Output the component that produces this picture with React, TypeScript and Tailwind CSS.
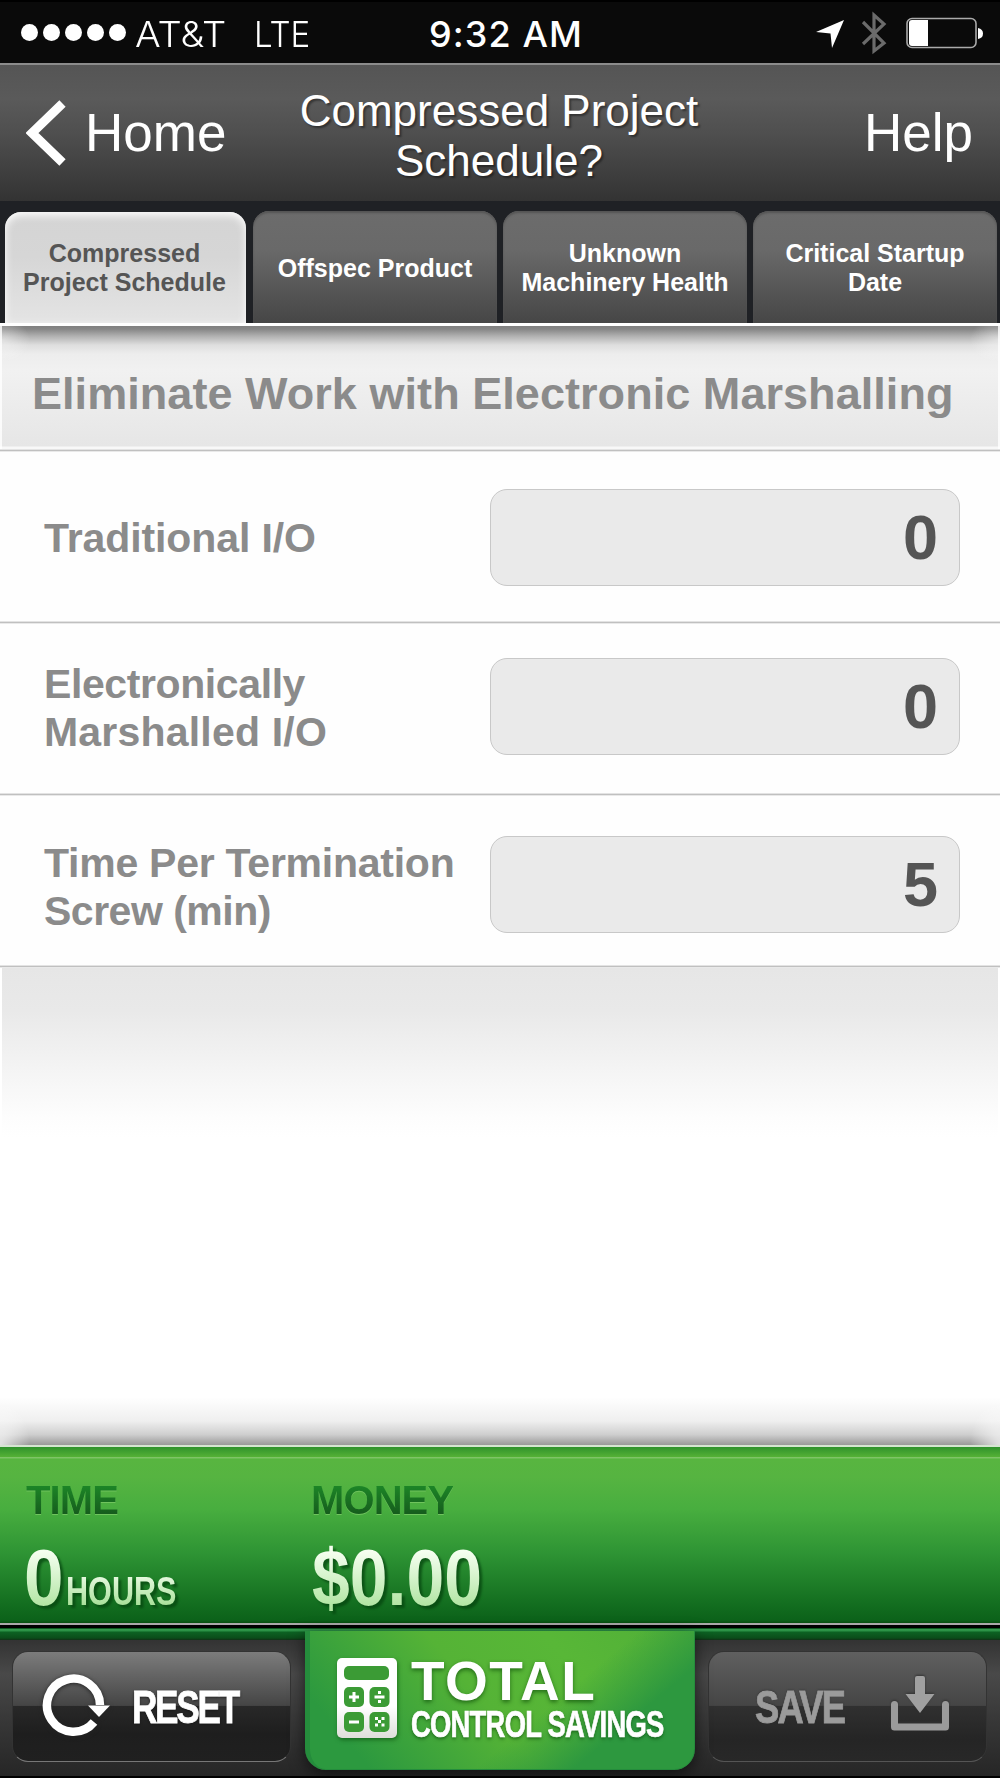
import { ReactNode } from "react";
import clsx from "clsx";

const TABS = [
  { lines: ["Compressed", "Project Schedule"], active: true },
  { lines: ["Offspec Product"] },
  { lines: ["Unknown", "Machinery Health"] },
  { lines: ["Critical Startup", "Date"] },
];

const FIELDS = [
  {
    lines: [{ text: "Traditional I/O", tracking: "tracking-[-0.1px]" }],
    value: "0",
    labelPad: "pt-[62px]",
    inputPad: "pt-[37px]",
  },
  {
    lines: [
      { text: "Electronically", tracking: "tracking-[-0.4px]" },
      { text: "Marshalled I/O", tracking: "tracking-[0.2px]" },
    ],
    value: "0",
    labelPad: "pt-[36px]",
    inputPad: "pt-[34px]",
  },
  {
    lines: [
      { text: "Time Per Termination", tracking: "tracking-[-0.25px]" },
      { text: "Screw (min)", tracking: "tracking-[-0.5px]" },
    ],
    value: "5",
    labelPad: "pt-[43px]",
    inputPad: "pt-[40px]",
  },
];

const Rule = () => (
  <div className="h-[3px] shrink-0 bg-[linear-gradient(#e3e3e3_33%,#c0c0c0_33%,#c0c0c0_66%,#e9e9e9_66%)]" />
);

const StatusBar = () => (
  <div className="flex h-[63px] shrink-0 items-start border-t-2 border-black bg-[#0a0a0a] font-['Inter',sans-serif] text-[36px] leading-[44px] text-white">
    <div className="flex w-[429px] pl-[21px]">
      <div className="flex gap-[5px] pt-[22px]">
        {[0, 1, 2, 3, 4].map(i => (
          <span key={i} className="size-[17px] rounded-full bg-white" />
        ))}
      </div>
      <span className="ml-[9px] w-[118px] origin-left scale-x-[1.06] whitespace-nowrap pt-[10px] font-light">AT&amp;T</span>
      <span className="ml-px origin-left scale-x-[0.92] whitespace-nowrap pt-[10px] font-light">LTE</span>
    </div>
    <span className="w-[387px] whitespace-nowrap pt-[10px] font-medium tracking-[1.1px]">9:32 AM</span>
    <svg width="28" height="28" viewBox="0 0 28 28" className="mt-[18px]">
      <path d="M28 0 L16 28 L14.5 13.5 L0 12 Z" fill="#fff" />
    </svg>
    <svg width="26" height="44" viewBox="0 0 26 44" className="ml-[17px] mt-[9px]" fill="none" stroke="#6b6b6b" strokeWidth="3.2">
      <path d="M2 11 L23 32 L13 40 V4 L23 13 L2 33" />
    </svg>
    <svg width="78" height="32" viewBox="0 0 78 32" className="ml-[19px] mt-[15px]">
      <rect x="1" y="1.5" width="69" height="29" rx="5" fill="none" stroke="#aaa" strokeWidth="1.6" />
      <path d="M6 3 H22 V29 H6 Q3 29 3 26 V6 Q3 3 6 3 Z" fill="#fff" />
      <path d="M72 11 Q77 12 77 16.500 Q77 21 72 22 Z" fill="#fff" />
    </svg>
  </div>
);

const NavBar = () => (
  <div className="flex h-[138px] shrink-0 justify-between border-t-2 border-[#8b8b8b] bg-[linear-gradient(#555_0%,#5a5a5a_25%,#4f4f4f_50%,#333_100%)] text-white">
    <div className="flex w-[269px] pl-[26px]">
      <svg width="40" height="66" viewBox="0 0 40 66" className="mt-[35px]">
        <path d="M36.500 3.500 L6 33 L36.500 62.500" fill="none" stroke="#fff" strokeWidth="9" />
      </svg>
      <span className="ml-[19px] pt-[38px] text-[53px] leading-[60px]">Home</span>
    </div>
    <div className="whitespace-nowrap pt-[21px] text-center text-[44px] leading-[50px] [text-shadow:2px_2px_2px_rgba(0,0,0,0.4)]">
      Compressed Project
      <br />
      Schedule?
    </div>
    <span className="w-[271px] pr-[27px] pt-[38px] text-right text-[53px] leading-[60px]">Help</span>
  </div>
);

const TabBar = () => (
  <div className="flex h-[125px] shrink-0 items-end gap-[6px] border-b-[3px] border-white bg-[#1f2125] pl-[5px] pr-[3px]">
    {TABS.map(tab => (
      <div
        key={tab.lines[0]}
        className={clsx(
          "flex flex-col items-center justify-center rounded-t-[16px] text-[25px] font-bold leading-[29px] whitespace-nowrap",
          tab.active
            ? "mr-px h-[111px] w-[241px] bg-[linear-gradient(#d4d4d4,#d6d6d6_40%,#e4e4e4)] pr-[2px] pt-px text-[#555] shadow-[inset_0_3px_8px_#fff]"
            : "h-[112px] w-[244px] bg-[linear-gradient(#6c6c6c,#696969_35%,#464646)] pt-[2px] text-white shadow-[inset_0_2px_2px_#555]",
        )}
      >
        {tab.lines.map(line => (
          <span key={line}>{line}</span>
        ))}
      </div>
    ))}
  </div>
);

// Text squeezed horizontally to get the condensed look
const Narrow = ({ className, children }: { className: string; children: ReactNode }) => (
  <span className={clsx("inline-block origin-left whitespace-nowrap font-bold", className)}>{children}</span>
);

const Totals = () => (
  <div className="h-[180px] shrink-0 border-b-2 border-t-2 border-b-[#a9a9a9] border-t-[#d5e5d1] bg-[linear-gradient(#2f922c_0px,#55b136_10px,#82c66a_10px,#7bc364_11px,#58b540_12px,#56b441_30px,#48ae3f_62px,#2e9434_106px,#116b1e_161px,#0c621a_173px,#075010_176px)]">
    <div className="flex pl-[26px] pt-[31px]">
      {[
        { name: "TIME", width: "w-[285px]" },
        { name: "MONEY", width: "w-[200px]" },
      ].map(({ name, width }) => (
        <div key={name} className={clsx("h-[44px] font-bold text-[40px] leading-[44px] tracking-[-0.9px]", width)}>
          <span className="bg-[linear-gradient(#1c8426_20%,#155a1c_85%)] bg-clip-text text-transparent drop-shadow-[0_1px_0_#70c45d]">
            {name}
          </span>
        </div>
      ))}
    </div>
    <div className="flex h-[88px] items-baseline pl-[24px] pt-[12px] leading-[88px] drop-shadow-[3px_3px_1px_rgba(5,70,15,0.75)]">
      <div className="flex w-[288px] items-baseline">
        <span className="w-[42px]">
          <Narrow className="scale-x-[0.9] bg-[linear-gradient(#f5fff0_20%,#aee49f_85%)] bg-clip-text text-[79px] text-transparent">0</Narrow>
        </span>
        <Narrow className="scale-x-[0.765] bg-[linear-gradient(#ecfbe6_30%,#a5df96_68%)] bg-clip-text text-[40px] text-transparent">HOURS</Narrow>
      </div>
      <Narrow className="scale-x-[0.86] bg-[linear-gradient(#f5fff0_20%,#aee49f_85%)] bg-clip-text text-[79px] text-transparent">$0.00</Narrow>
    </div>
  </div>
);

const BUTTON =
  "flex h-[111px] w-[279px] rounded-[16px] border border-t-[#333] border-x-[#333]";

const CalculatorIcon = () => (
  <svg width="60" height="81" viewBox="0 0 60 81" className="mt-[27px] drop-shadow-[1px_2px_2px_rgba(0,60,0,0.5)]">
    <defs>
      <linearGradient id="calc" x2="0" y2="1">
        <stop offset="0.6" stopColor="#fff" />
        <stop offset="1" stopColor="#dededa" />
      </linearGradient>
    </defs>
    <rect width="60" height="80" rx="5" fill="url(#calc)" />
    <g fill="#3b9b35">
      <rect x="7" y="8" width="45" height="14" rx="5" />
      <rect x="7" y="29" width="20" height="20" rx="5" />
      <rect x="32.500" y="29" width="20" height="20" rx="5" />
      <rect x="7" y="54" width="20" height="20" rx="5" />
      <rect x="32.500" y="54" width="20" height="20" rx="5" />
    </g>
    <path d="M12 39 h10 M17 34 v10 M37.500 39 h10 M12 64 h10" stroke="#fff" strokeWidth="3" />
    <path d="M41 33 h3 v3 h-3z M41 42 h3 v3 h-3z M41 62 h3 v3 h-3z M38 59 h3 v3 h-3z M44.500 59 h3 v3 h-3z M38 65.500 h3 v3 h-3z M44.500 65.500 h3 v3 h-3z" fill="#fff" />
  </svg>
);

const BottomBar = () => (
  <>
    <div className="h-[3px] shrink-0 bg-black" />
    <div className="h-[12px] shrink-0 bg-[linear-gradient(#0c5a20_0px,#0c5a20_1px,#3a9950_1px,#289044_3px,#0d6223_4px,#0b4d1a_10px,#123016_12px)]" />
    <div className="flex h-[138px] shrink-0 border-b-2 border-black bg-[linear-gradient(#333_0%,#494949_25%,#373737_60%,#262626_100%)] pl-[12px]">
      <div className={clsx(BUTTON, "mt-[11px] border-b-[#777] bg-[linear-gradient(#7c7c7c_0%,#454545_49%,#282828_50%,#1e1e1e_75%,#202020_100%)]")}>
        <svg width="72" height="66" viewBox="0 0 72 66" className="ml-[27px] mt-[20px] drop-shadow-[0_1px_2px_#222]" fill="none">
          <path d="M54 50 A26.500 26.500 0 1 1 60 33" stroke="#fff" strokeWidth="8.500" />
          <path d="M48 33.500 H70 L59 45 Z" fill="#fff" />
        </svg>
        <Narrow className="ml-[20px] mt-[27px] scale-x-[0.765] text-[46px] leading-[56px] tracking-[-3px] text-white [-webkit-text-stroke:0.800px_#fff] [text-shadow:0_1px_3px_#111]">
          RESET
        </Narrow>
      </div>
      <div className="relative -mt-[9px] ml-[14px] flex h-[139px] w-[390px] shrink-0 rounded-b-[21px] border-b border-l-[5px] border-r border-[#258c3c] bg-[linear-gradient(140deg,transparent_60%,#2d983f_78%),linear-gradient(50deg,#2c993f_12%,#55b336_46%,#58b737_70%,#50af38)] pl-[27px] text-white shadow-[0_4px_16px_rgba(0,0,0,0.6)]">
        <CalculatorIcon />
        <div className="flex w-[270px] flex-col pl-[14px] pt-[22px] [text-shadow:0_2px_4px_rgba(0,60,0,0.6)]">
          <div className="text-[55px] font-bold leading-[57px] tracking-[1.400px]">TOTAL</div>
          <Narrow className="-mt-[6px] scale-x-[0.74] text-[37px] leading-[42px] tracking-[-1px] [-webkit-text-stroke:0.700px_#fff]">
            CONTROL SAVINGS
          </Narrow>
        </div>
      </div>
      <div className={clsx(BUTTON, "ml-[13px] mt-[11px] border-b-[#555] bg-[linear-gradient(#606060_0%,#454545_49%,#303030_50%,#252525_80%,#282828_100%)]")}>
        <div className="w-[137px] pl-[46px] pt-[27px]">
          <Narrow className="scale-x-[0.79] text-[46px] leading-[56px] tracking-[-2.200px] text-[#9b9b9b] [-webkit-text-stroke:0.800px_#9b9b9b] [text-shadow:0_-1px_2px_#333]">
            SAVE
          </Narrow>
        </div>
        <svg width="58" height="56" viewBox="0 0 58 56" className="ml-[45px] mt-[24px] drop-shadow-[0_-1px_1px_#333]" fill="none">
          <path d="M3.500 28.500 V51 H54.500 V28.500" stroke="#9b9b9b" strokeWidth="7" strokeLinecap="round" strokeLinejoin="round" />
          <path d="M24 2 Q24 0 26 0 H32 Q34 0 34 2 V18 H43.500 L29 37 L14.500 18 H24 Z" fill="#a0a0a0" />
        </svg>
      </div>
    </div>
  </>
);

export default function App() {
  return (
    <div className="flex h-[1778px] w-[1000px] flex-col overflow-hidden bg-white font-['Liberation_Sans',sans-serif]">
      <StatusBar />
      <NavBar />
      <TabBar />

      <div className="h-[123px] shrink-0 border-x-2 border-white/80 bg-[radial-gradient(28px_22px_at_0_14px,rgba(255,255,255,0.45),transparent),radial-gradient(28px_22px_at_100%_14px,rgba(255,255,255,0.45),transparent),linear-gradient(#808080_0px,#858585_3px,#b0b0b0_10px,#dedede_19px,#ededed_28px,#f1f1f1_45px,#e6e6e6_120px,#f8f8f8_121px)]">
        <h1 className="whitespace-nowrap pl-[30px] pt-[38px] text-[45px] font-bold leading-[60px] tracking-[0.050px] text-[#8b8b8b]">
          Eliminate Work with Electronic Marshalling
        </h1>
      </div>
      <Rule />

      {FIELDS.map(({ lines, value, labelPad, inputPad }) => (
        <div key={lines[0].text} className="shrink-0">
          <div className="flex h-[169px] bg-[#fefefe] pl-[44px]">
            <div className={clsx("w-[446px] whitespace-nowrap text-[41px] font-bold leading-[48px] text-[#8b8b8b]", labelPad)}>
              {lines.map(line => (
                <div key={line.text} className={line.tracking}>
                  {line.text}
                </div>
              ))}
            </div>
            <div className={inputPad}>
              <input
                readOnly
                value={value}
                className="block h-[97px] w-[470px] rounded-[17px] border border-[#c8c8c8] bg-[#eaeaea] pb-[2px] pr-[21px] text-right text-[63px] font-bold text-[#555] outline-none"
              />
            </div>
          </div>
          <Rule />
        </div>
      ))}

      <div className="flex flex-1 flex-col justify-between">
        <div className="h-[170px] border-x-2 border-white bg-[linear-gradient(#e6e6e6,#e9e9e9_25%,#fdfdfd_88%,#fff)]" />
        <div className="h-[48px] bg-[radial-gradient(30px_44px_at_0_100%,rgba(255,255,255,0.7),transparent),radial-gradient(30px_44px_at_100%_100%,rgba(255,255,255,0.7),transparent),linear-gradient(#fff,#efefef_50%,#cfcfcf_78%,#999)]" />
      </div>

      <Totals />
      <BottomBar />
    </div>
  );
}
